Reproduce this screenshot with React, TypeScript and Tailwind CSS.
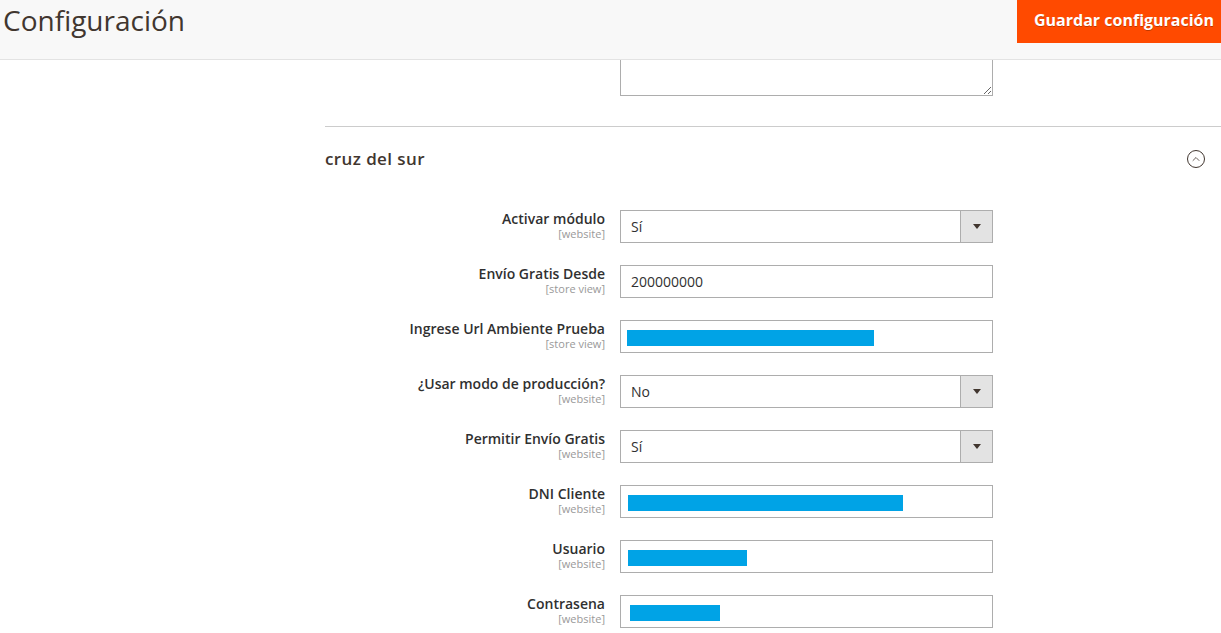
import { ChevronUp } from "lucide-react";

type Row = {
  label: string;
  scope: string;
  kind: "select" | "text" | "bar";
  value?: string;
  bar?: { left: number; width: number };
};

const rows: Row[] = [
  { label: "Activar módulo", scope: "[website]", kind: "select", value: "Sí" },
  { label: "Envío Gratis Desde", scope: "[store view]", kind: "text", value: "200000000" },
  { label: "Ingrese Url Ambiente Prueba", scope: "[store view]", kind: "bar", bar: { left: 6, width: 247 } },
  { label: "¿Usar modo de producción?", scope: "[website]", kind: "select", value: "No" },
  { label: "Permitir Envío Gratis", scope: "[website]", kind: "select", value: "Sí" },
  { label: "DNI Cliente", scope: "[website]", kind: "bar", bar: { left: 7, width: 275 } },
  { label: "Usuario", scope: "[website]", kind: "bar", bar: { left: 7, width: 119 } },
  { label: "Contrasena", scope: "[website]", kind: "bar", bar: { left: 9, width: 90 } },
];

function Field({ row }: { row: Row }) {
  if (row.kind === "select") {
    return (
      <div className="flex h-[33px] w-[373px] border border-[#adadad] bg-white">
        <div className="flex flex-1 items-center pl-[10px] text-[14px] text-[#303030]">{row.value}</div>
        <div className="flex w-[32px] items-center justify-center border-l border-[#adadad] bg-[#e3e3e3]">
          <span className="h-0 w-0 border-x-[4px] border-t-[5px] border-x-transparent border-t-[#41362f]" />
        </div>
      </div>
    );
  }
  if (row.kind === "text") {
    return (
      <div className="flex h-[33px] w-[373px] items-center border border-[#adadad] bg-white pl-[10px] text-[14px] text-[#303030]">
        {row.value}
      </div>
    );
  }
  return (
    <div className="relative h-[33px] w-[373px] border border-[#adadad] bg-white">
      {/* dato tapado */}
      <div
        className="absolute top-[9px] h-[16px] bg-[#00a3e6]"
        style={{ left: row.bar!.left, width: row.bar!.width }}
      />
    </div>
  );
}

export default function App() {
  return (
    <div className="min-h-screen bg-white font-['Open_Sans',sans-serif]">
      <header className="flex h-[60px] items-start justify-between border-b border-[#e3e3e3] bg-[#f8f8f8]">
        <h1 className="pl-[3px] pt-[1px] text-[28px] leading-[38px] font-normal text-[#41362f]">Configuración</h1>
        <button className="flex h-[43px] w-[204px] items-center bg-[#ff4a00] pb-[3px] pl-[17px] text-[16px] font-bold text-white [text-shadow:0_1px_0_rgba(0,0,0,0.25)]">
          Guardar configuración
        </button>
      </header>

      <div className="flex">
        <div className="w-[325px] shrink-0" />
        <div className="flex-1">
          <div className="flex">
            <div className="w-[295px] shrink-0" />
            <textarea
              readOnly
              className="h-[36px] w-[373px] border border-t-0 border-[#adadad] bg-white outline-none"
            />
          </div>

          <div className="mt-[30px] border-t border-[#cccccc]" />

          <div className="flex h-[63px] items-center justify-between pr-[16px]">
            <h2 className="text-[17px] font-semibold tracking-[0.4px] text-[#41362f]">cruz del sur</h2>
            <div className="flex h-[18px] w-[18px] items-center justify-center rounded-full border border-[#41362f]">
              <ChevronUp size={12} strokeWidth={1.6} color="#41362f" />
            </div>
          </div>

          <div className="mt-[20px] flex flex-col gap-[22px]">
            {rows.map((row) => (
              <div key={row.label} className="flex">
                <div className="flex w-[280px] shrink-0 flex-col items-end">
                  <span className="text-[14px] leading-[18px] font-semibold text-[#303030]">{row.label}</span>
                  <span className="text-[11px] leading-[12px] text-[#999999]">{row.scope}</span>
                </div>
                <div className="w-[15px] shrink-0" />
                <Field row={row} />
              </div>
            ))}
          </div>
        </div>
      </div>
    </div>
  );
}
